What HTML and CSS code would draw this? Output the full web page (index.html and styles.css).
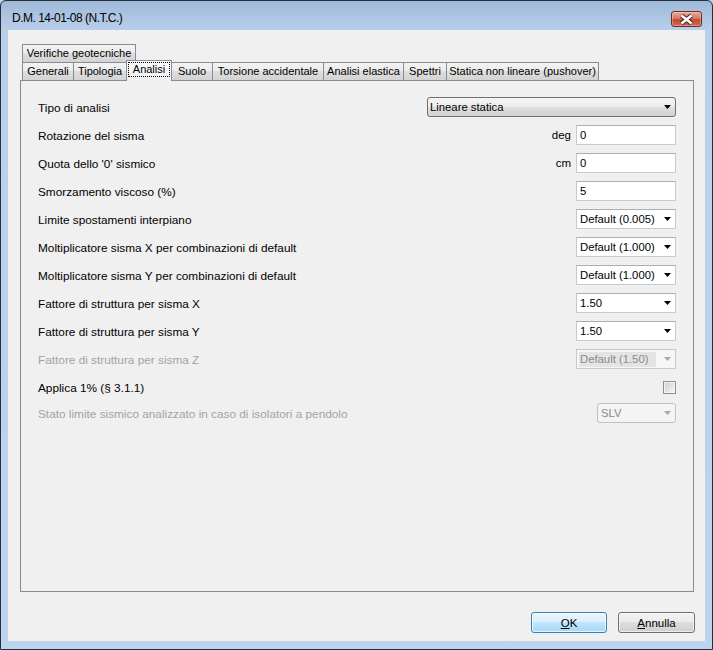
FILE: index.html
```html
<!DOCTYPE html>
<html lang="it">
<head>
  <meta charset="UTF-8">
  <title>D.M. 14-01-08 (N.T.C.)</title>
  <link rel="stylesheet" href="styles.css">
</head>
<body>
  <div class="window">
    <div class="titlebar">
      <span class="title">D.M. 14-01-08 (N.T.C.)</span>
      <button class="close" title="Chiudi">
        <svg width="29" height="15" viewBox="0 0 29 15">
          <path d="M9.5 3.5 L19.5 11.5 M19.5 3.5 L9.5 11.5" stroke="#3d2421" stroke-width="4.6" fill="none"/>
          <path d="M9.5 3.5 L19.5 11.5 M19.5 3.5 L9.5 11.5" stroke="#fff" stroke-width="2.6" fill="none"/>
        </svg>
      </button>
    </div>

    <div class="client">
      <div class="tabs">
        <div class="tab-row back">
          <div class="tab">Verifiche geotecniche</div>
        </div>
        <div class="tab-row front">
          <div class="tab">Generali</div>
          <div class="tab">Tipologia</div>
          <div class="tab active"><span class="focus">Analisi</span></div>
          <div class="tab">Suolo</div>
          <div class="tab">Torsione accidentale</div>
          <div class="tab">Analisi elastica</div>
          <div class="tab">Spettri</div>
          <div class="tab">Statica non lineare (pushover)</div>
        </div>
      </div>

      <div class="panel">
        <div class="field">
          <span class="label">Tipo di analisi</span>
          <div class="combo list wide"><span class="value">Lineare statica</span><span class="arrow"></span></div>
        </div>
        <div class="field">
          <span class="label">Rotazione del sisma</span>
          <span class="unit">deg</span>
          <div class="edit">0</div>
        </div>
        <div class="field">
          <span class="label">Quota dello '0' sismico</span>
          <span class="unit">cm</span>
          <div class="edit">0</div>
        </div>
        <div class="field">
          <span class="label">Smorzamento viscoso (%)</span>
          <div class="edit">5</div>
        </div>
        <div class="field">
          <span class="label">Limite spostamenti interpiano</span>
          <div class="combo"><span class="value">Default (0.005)</span><span class="arrow"></span></div>
        </div>
        <div class="field">
          <span class="label">Moltiplicatore sisma X per combinazioni di default</span>
          <div class="combo"><span class="value">Default (1.000)</span><span class="arrow"></span></div>
        </div>
        <div class="field">
          <span class="label">Moltiplicatore sisma Y per combinazioni di default</span>
          <div class="combo"><span class="value">Default (1.000)</span><span class="arrow"></span></div>
        </div>
        <div class="field">
          <span class="label">Fattore di struttura per sisma X</span>
          <div class="combo"><span class="value">1.50</span><span class="arrow"></span></div>
        </div>
        <div class="field">
          <span class="label">Fattore di struttura per sisma Y</span>
          <div class="combo"><span class="value">1.50</span><span class="arrow"></span></div>
        </div>
        <div class="field">
          <span class="label disabled">Fattore di struttura per sisma Z</span>
          <div class="combo disabled"><span class="value selected">Default (1.50)</span><span class="arrow"></span></div>
        </div>
        <div class="field">
          <span class="label">Applica 1% (§ 3.1.1)</span>
          <span class="checkbox"></span>
        </div>
        <div class="field last">
          <span class="label disabled">Stato limite sismico analizzato in caso di isolatori a pendolo</span>
          <div class="combo list disabled narrow"><span class="value">SLV</span><span class="arrow"></span></div>
        </div>
      </div>

      <div class="actions">
        <button class="btn btn-default"><u>O</u>K</button>
        <button class="btn btn-cancel"><u>A</u>nnulla</button>
      </div>
    </div>
  </div>
</body>
</html>
```

FILE: styles.css
```css
* {
  box-sizing: border-box;
}

html, body {
  margin: 0;
  padding: 0;
}

body {
  font-family: "Liberation Sans", Arial, sans-serif;
  font-size: 11px;
  color: #000;
  background: #bcd3ec;
}

.window {
  width: 713px;
  height: 650px;
  border: 1px solid #26303b;
  border-radius: 6px 6px 0 0;
  background: linear-gradient(#9fb9d9, #b9d0eb 30px, #bcd4ee);
  display: flex;
  flex-direction: column;
  padding: 0 7px 8px;
}

.titlebar {
  height: 29px;
  display: flex;
  align-items: flex-start;
  justify-content: space-between;
}

.title {
  font-size: 12px;
  letter-spacing: -0.5px;
  line-height: 16px;
  padding: 9px 0 0 4px;
}

.close {
  width: 31px;
  height: 16px;
  margin: 10px 3px 0 0;
  padding: 0;
  border: 1px solid #6e2b24;
  border-radius: 3px;
  background: linear-gradient(#e6a898, #d77c68 45%, #c5472f 55%, #d5694f);
  box-shadow: inset 0 0 0 1px rgba(255, 255, 255, 0.3);
  display: flex;
  align-items: center;
  justify-content: center;
}

.client {
  flex: 1;
  background: #f0f0f0;
  display: flex;
  flex-direction: column;
  padding: 14px 10px 8px 12px;
}

/* schede */
.tabs {
  margin-left: 2px;
}

.tab-row {
  display: flex;
  height: 18px;
}

.tab-row.front {
  display: grid;
  grid-template-columns: 51px 53px 45px 41px 111px 80px 43px 152px;
}

.tab {
  border: 1px solid #898c95;
  border-bottom: none;
  margin-right: -1px;
  background: linear-gradient(#f3f3f3, #ebebeb 50%, #dedede 50%, #d3d3d3);
  line-height: 17px;
  text-align: center;
  white-space: nowrap;
}

.tab-row.back .tab {
  width: 114px;
}

.tab.active {
  position: relative;
  z-index: 1;
  margin-top: -2px;
  margin-bottom: -1px;
  background: linear-gradient(#fbfbfb, #f0f0f0);
}

.tab .focus {
  display: block;
  margin: 1px 1px 0;
  height: 15px;
  line-height: 13px;
  border: 1px dotted #000;
}

.panel {
  flex: 1;
  margin-right: 1px;
  border: 1px solid #898c95;
  background: #f0f0f0;
  padding: 12px 17px 0;
}

/* righe */
.field {
  display: flex;
  align-items: center;
  height: 28px;
}

.field.last {
  margin-top: -2px;
}

.label {
  flex: 1;
  font-size: 11.8px;
  line-height: 16px;
  padding-top: 2px;
  white-space: nowrap;
}

.label.disabled {
  color: #a3a3a3;
}

.unit {
  margin-right: 5px;
  font-size: 11.5px;
}

.edit,
.combo {
  width: 100px;
  height: 20px;
  background: #fff;
  border: 1px solid #c6c9ce;
  border-top-color: #abadb3;
  padding: 0 3px;
  line-height: 18px;
  font-size: 11.3px;
}

.combo {
  display: flex;
  align-items: center;
  padding-right: 4px;
}

.combo .value {
  flex: 1;
}

.arrow {
  width: 7px;
  height: 4px;
  background: #000;
  clip-path: polygon(0 0, 100% 0, 50% 100%);
}

.combo.list {
  border: 1px solid #707070;
  border-radius: 3px;
  background: linear-gradient(#f4f4f4, #ececec 50%, #dfdfdf 50%, #d3d3d3);
  padding-left: 2px;
}

.combo.wide {
  width: 249px;
}

.combo.narrow {
  width: 79px;
}

.combo.disabled {
  background: #f6f6f6;
  border-color: #c9c9c9;
  color: #8a8a8a;
  padding-left: 2px;
}

.combo.list.disabled {
  background: #f4f4f4;
  border-color: #bfc2c5;
  padding-left: 3px;
}

.combo.disabled .arrow {
  background: #a8a8a8;
}

.combo .selected {
  flex: 0 0 77px;
  height: 15px;
  line-height: 15px;
  background: #e4e4e4;
  padding-left: 1px;
  margin-right: auto;
}

.checkbox {
  width: 13px;
  height: 13px;
  border: 1px solid #8e8f8f;
  background: linear-gradient(135deg, #cbcfd5, #f6f6f6);
  box-shadow: inset 0 0 0 1px #f4f4f4;
}

/* pulsanti */
.actions {
  display: flex;
  justify-content: flex-end;
  gap: 11px;
  margin-top: 20px;
}

.btn {
  height: 21px;
  width: 77px;
  padding: 0;
  font-family: inherit;
  font-size: 11.5px;
  color: #000;
  border: 1px solid #707070;
  border-radius: 3px;
  background: linear-gradient(#f2f2f2, #ebebeb 50%, #dddddd 50%, #cfcfcf);
  box-shadow: inset 0 0 0 1px rgba(255, 255, 255, 0.6);
}

.btn-default {
  width: 76px;
  border-color: #3c7fb1;
  background: linear-gradient(#eaf6fd, #d9f0fc 50%, #bee6fd 50%, #a7d9f5);
  box-shadow: inset 0 0 0 1px rgba(255, 255, 255, 0.7);
}
```
